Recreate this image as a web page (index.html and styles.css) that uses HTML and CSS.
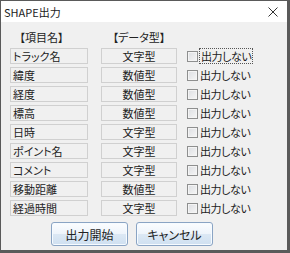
FILE: index.html
```html
<!DOCTYPE html>
<html lang="ja">
  <head>
    <meta charset="UTF-8" />
    <title>SHAPE出力</title>
    <link rel="stylesheet" href="styles.css">
  </head>
  <body>
    <div class="janela">
      <div class="titulo">
        <span>SHAPE出力</span>
        <svg class="fechar" width="10" height="10" viewBox="0 0 10 10">
          <path d="M0.5 0.5 L9.5 9.5 M9.5 0.5 L0.5 9.5" stroke="#333" stroke-width="1" fill="none" />
        </svg>
      </div>

      <div class="corpo">
        <div class="grade">
          <div class="cab cab-nome">【項目名】</div>
          <div class="cab">【データ型】</div>
          <div></div>

          <div class="campo">トラック名</div>
          <div class="campo tipo">文字型</div>
          <label class="opcao"><span class="caixa"></span><span class="foco">出力しない</span></label>

          <div class="campo">緯度</div>
          <div class="campo tipo">数値型</div>
          <label class="opcao"><span class="caixa"></span><span>出力しない</span></label>

          <div class="campo">経度</div>
          <div class="campo tipo">数値型</div>
          <label class="opcao"><span class="caixa"></span><span>出力しない</span></label>

          <div class="campo">標高</div>
          <div class="campo tipo">数値型</div>
          <label class="opcao"><span class="caixa"></span><span>出力しない</span></label>

          <div class="campo">日時</div>
          <div class="campo tipo">文字型</div>
          <label class="opcao"><span class="caixa"></span><span>出力しない</span></label>

          <div class="campo">ポイント名</div>
          <div class="campo tipo">文字型</div>
          <label class="opcao"><span class="caixa"></span><span>出力しない</span></label>

          <div class="campo">コメント</div>
          <div class="campo tipo">文字型</div>
          <label class="opcao"><span class="caixa"></span><span>出力しない</span></label>

          <div class="campo">移動距離</div>
          <div class="campo tipo">数値型</div>
          <label class="opcao"><span class="caixa"></span><span>出力しない</span></label>

          <div class="campo">経過時間</div>
          <div class="campo tipo">文字型</div>
          <label class="opcao"><span class="caixa"></span><span>出力しない</span></label>
        </div>

        <div class="botoes">
          <button class="botao">出力開始</button>
          <button class="botao">キャンセル</button>
        </div>
      </div>
    </div>
  </body>
</html>
```

FILE: styles.css
```css
* {
  margin: 0;
  padding: 0;
  box-sizing: border-box;
}

body {
  font-family: "Noto Sans CJK JP", "Noto Sans", sans-serif;
  font-size: 11px;
  font-feature-settings: "palt";
  color: #222;
  background-color: #ffffff;
}

.janela {
  width: 290px;
  height: 253px;
  border: 1px solid #5a5a5a;
  border-right-width: 3px;
  border-bottom-width: 3px;
  background-color: #f0f0f0;
  display: flex;
  flex-direction: column;
}

.titulo {
  height: 21px;
  background-color: #ffffff;
  display: flex;
  align-items: center;
  justify-content: space-between;
  padding: 1px 9px 0 3px;
  line-height: 14px;
}

.corpo {
  padding: 8px 0 0 9px;
}

.grade {
  display: grid;
  grid-template-columns: 78px 76px auto;
  column-gap: 13px;
  row-gap: 3px;
  align-items: center;
}

.grade .tipo + .opcao {
  margin-left: -3px;
}

.cab {
  height: 15px;
  line-height: 15px;
  text-align: center;
}

.cab-nome {
  padding-right: 15px;
}

.campo {
  height: 16px;
  line-height: 14px;
  border: 1px solid #d0d0d0;
  background-color: #f0f0f0;
  padding-left: 2px;
  white-space: nowrap;
}

.tipo {
  text-align: center;
  padding-left: 0;
}

.opcao {
  display: flex;
  align-items: center;
  gap: 2px;
  height: 16px;
  line-height: 14px;
  letter-spacing: -0.4px;
}

.caixa {
  width: 11px;
  height: 11px;
  border: 1px solid #8e8f8f;
  background: linear-gradient(135deg, #dcdee2, #f6f6f6);
  box-shadow: inset 0 0 0 1px #f4f4f4;
}

.foco {
  outline: 1px dotted #555;
  padding: 0 1px;
}

.botoes {
  display: flex;
  gap: 8px;
  margin: 6px 0 0 41px;
}

.botao {
  width: 77px;
  height: 24px;
  font-family: inherit;
  font-size: 12px;
  font-feature-settings: "palt";
  color: #222;
  border: 1px solid #8aa4c4;
  border-radius: 3px;
  background: linear-gradient(#fbfdff 0%, #eef4fb 50%, #dce8f4 51%, #cfe0f1 100%);
  box-shadow: inset 0 0 0 1px #f6fbff;
}
```
